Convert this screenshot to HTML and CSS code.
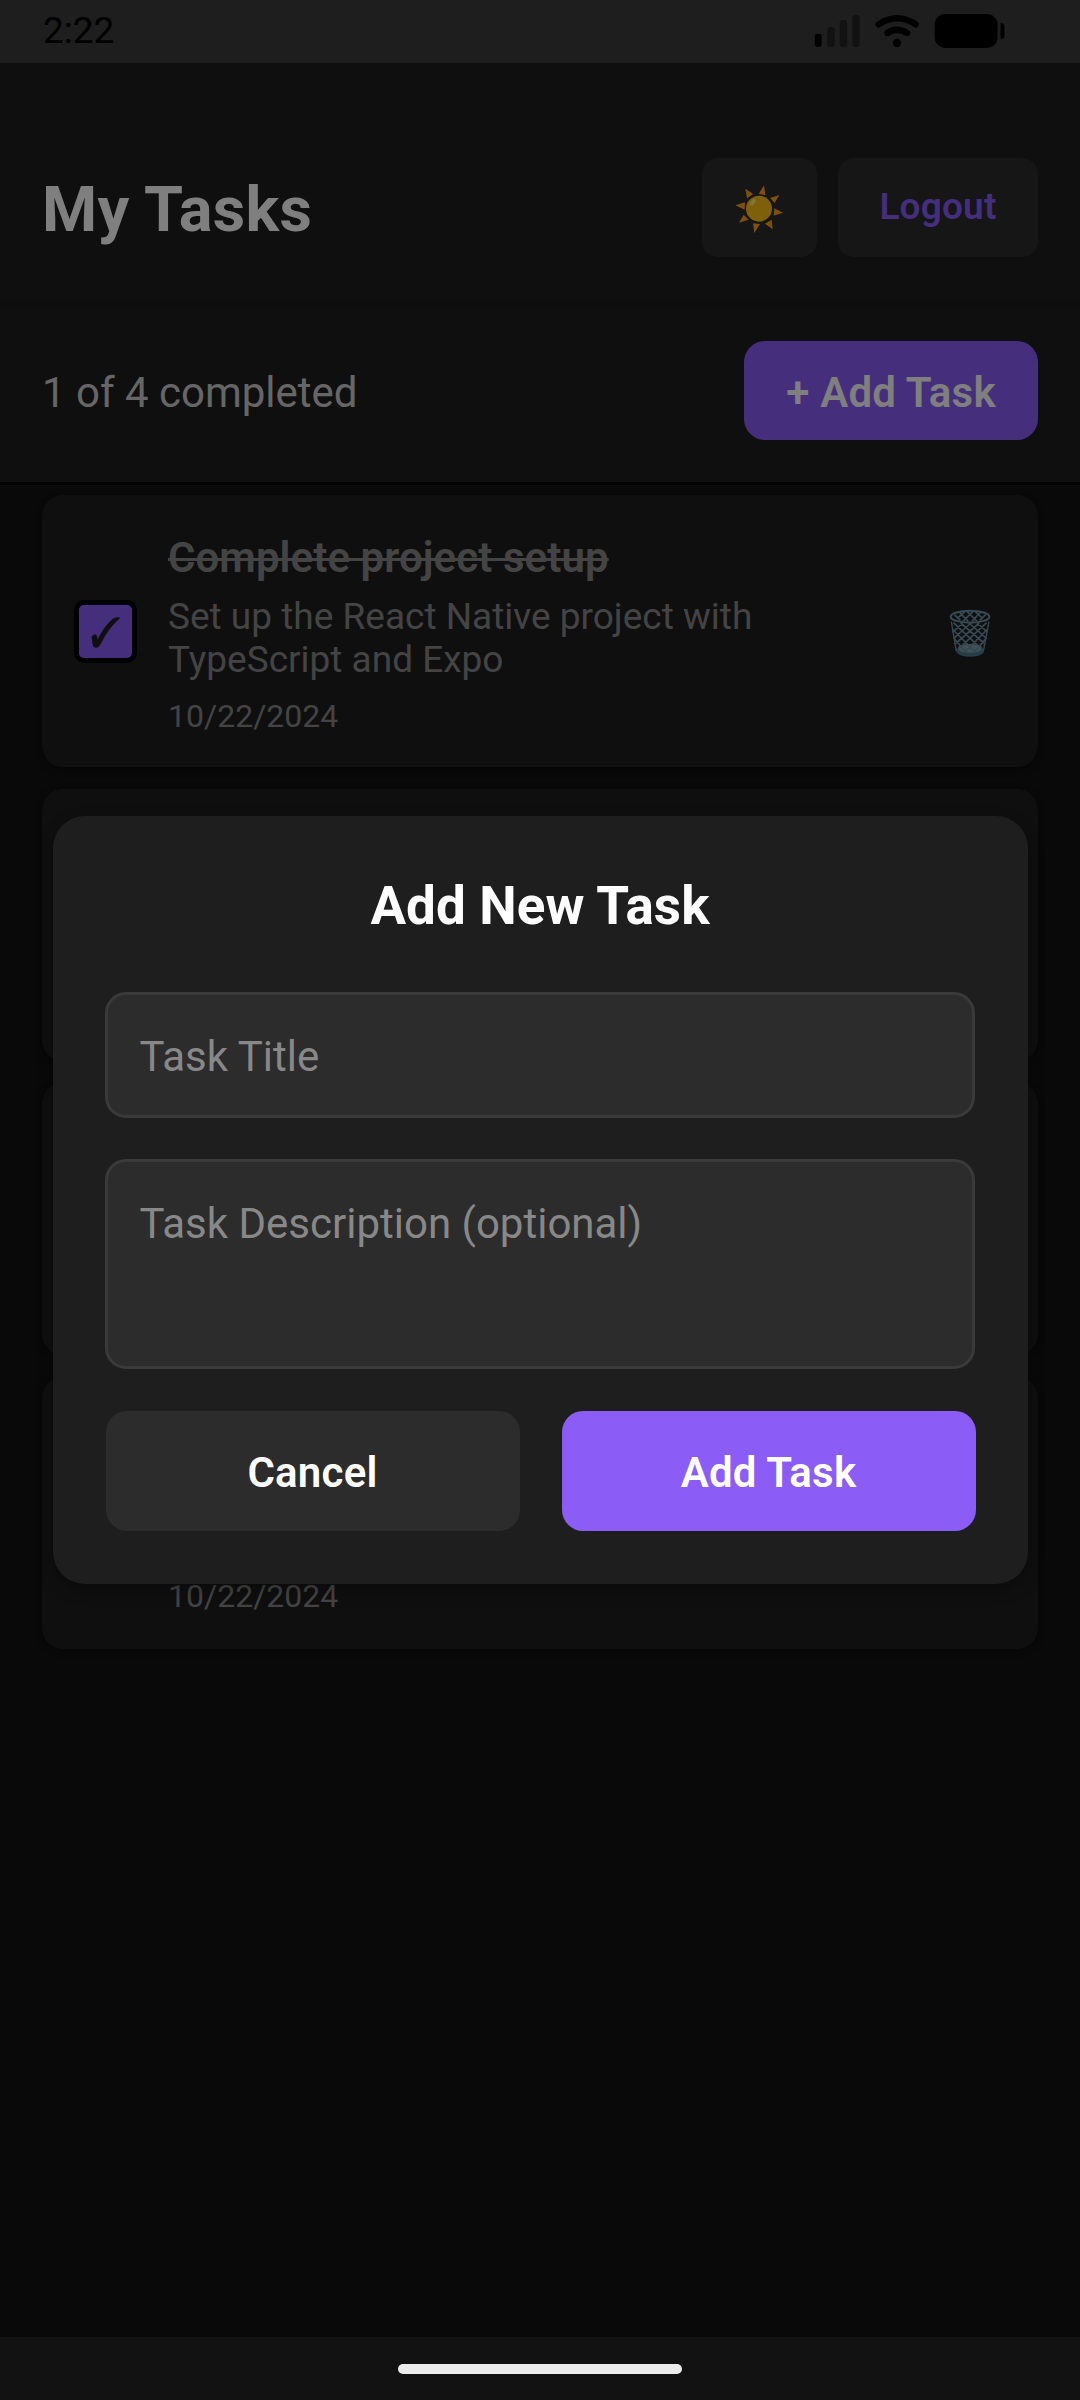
FILE: index.html
```html
<!DOCTYPE html>
<html lang="en">
<head>
<meta charset="utf-8">
<title>My Tasks</title>
<link rel="stylesheet" href="styles.css">
</head>
<body>
<div class="screen">
  <div class="status-bar">
    <span class="clock">2:22</span>
    <svg class="status-icons" viewBox="100 36 580 112">
      <rect x="105" y="101" width="21" height="40" rx="10"/>
      <g fill="#121212">
        <rect x="143" y="81" width="22" height="60" rx="10"/>
        <rect x="180" y="60" width="22" height="81" rx="10"/>
        <rect x="218" y="44" width="22" height="97" rx="10"/>
      </g>
      <g fill="none" stroke="#000" stroke-width="19" stroke-linecap="round">
        <path d="M297 73Q352 37 408 73"/>
        <path d="M323 99Q352 80 382 99"/>
      </g>
      <circle cx="352" cy="129" r="12.500"/>
      <rect x="465" y="42" width="189" height="102" rx="32"/>
      <path d="M663 69Q675 69 675 81V105Q675 117 663 117Z"/>
    </svg>
  </div>

  <main class="app">
    <header class="header">
      <h1 class="header-title">My Tasks</h1>
      <div class="header-actions">
        <button class="button button-theme" aria-label="Toggle theme">
          <svg class="sun" viewBox="159 160 156 156">
            <path fill="#ff9f1c" d="M252 167L236 193 256 196ZM298 196L270 205 284 220ZM309 249L283 236 281 258ZM278 299L255 282 275 270ZM223 310L219 281 240 283ZM177 279L191 255 206 270ZM166 227L195 218 194 240ZM196 177L220 193 201 206Z"/>
            <circle cx="237" cy="237" r="39" fill="#fcc014"/>
            <ellipse cx="219" cy="218" rx="6" ry="11" fill="#ffec78" transform="rotate(30 219 218)"/>
          </svg>
        </button>
        <button class="button button-logout">Logout</button>
      </div>
    </header>

    <section class="stats">
      <span class="stats-text">1 of 4 completed</span>
      <button class="button button-add">+ Add Task</button>
    </section>

    <section class="task-list">
      <article class="task">
        <span class="checkbox">
          <svg class="check" viewBox="237 405 159 159">
            <path d="M276 499Q286 491 289 497L293 511Q312 470 338 448Q347 441 359 444Q324 474 301 522Q295 534 287 532Q280 532 279 523Z"/>
          </svg>
        </span>
        <div class="task-body">
          <h2 class="task-title">Complete project setup</h2>
          <p class="task-text">Set up the React Native project with TypeScript and Expo</p>
          <time class="task-date">10/22/2024</time>
        </div>
        <svg class="trash" viewBox="745 415 132 150">
          <path fill="#4a7d90" d="M768 538Q810 556 853 538L851 550Q840 561 811 561 782 561 772 550Z"/>
          <ellipse cx="811" cy="536" rx="37" ry="13" fill="#83a3af"/>
          <path fill="none" stroke="#6c91a3" stroke-width="5" d="M761 459L848 540M758 478L828 549M765 509L800 548M783 460L856 523M808 460L861 507M833 460L864 488M861 459L774 540M864 478L794 549M857 509L822 548M839 460L766 523M814 460L761 507M789 460L758 488M764 435L782 452M780 428L806 456M802 425L832 455M826 425L850 447M858 435L840 452M842 428L816 456M820 425L790 455M796 425L772 447"/>
          <path fill="none" stroke="#6c91a3" stroke-width="4" d="M755 456L770 545M868 456L851 545"/>
          <ellipse cx="811" cy="441" rx="58" ry="18" fill="none" stroke="#7095a6" stroke-width="6"/>
        </svg>
      </article>
      <article class="task"></article>
      <article class="task"></article>
      <article class="task">
        <span class="checkbox checkbox-empty"></span>
        <div class="task-body task-body-end">
          <time class="task-date">10/22/2024</time>
        </div>
      </article>
    </section>

    <div class="overlay">
      <form class="modal">
        <h2 class="modal-title">Add New Task</h2>
        <input class="field" placeholder="Task Title">
        <textarea class="field field-multi" placeholder="Task Description (optional)"></textarea>
        <div class="modal-actions">
          <button type="button" class="button modal-button">Cancel</button>
          <button type="button" class="button modal-button modal-button-primary">Add Task</button>
        </div>
      </form>
    </div>
  </main>

  <footer class="nav-bar"><span class="nav-handle"></span></footer>
</div>
</body>
</html>
```
FILE: styles.css
```css
* {
  box-sizing: border-box;
}

body,
h1,
h2,
p {
  margin: 0;
}

body {
  background: #121212;
  font-family: Roboto, sans-serif;
}

.screen {
  display: flex;
  flex-direction: column;
  width: 1080px;
  height: 2400px;
  overflow: hidden;
}

.status-bar {
  display: flex;
  justify-content: space-between;
  height: 63px;
  padding: 9px 73.5px 0 43px;
  background: #1e1e1e;
}

.clock {
  color: #000;
  font-size: 37px;
  line-height: 43px;
}

.status-icons {
  width: 193.3px;
  height: 37.3px;
  margin-top: 3px;
}

.app {
  position: relative;
  flex: 1;
  background: #121212;
}

.button {
  border: 0;
  font-family: inherit;
  font-weight: 600;
  letter-spacing: 0.2px;
}

.header {
  display: flex;
  align-items: center;
  justify-content: space-between;
  height: 237px;
  padding: 95px 42px 43px;
  background: #1e1e1e;
}

.header-title {
  padding-top: 4px;
  color: #fff;
  font-size: 63px;
  letter-spacing: 0.35px;
  line-height: 74px;
}

.header-actions {
  display: flex;
  gap: 21px;
}

.button-theme,
.button-logout {
  display: flex;
  align-items: center;
  justify-content: center;
  height: 99px;
  border-radius: 16px;
  background: #2c2c2c;
}

.button-theme {
  width: 115px;
  padding: 3px 2px 0 0;
}

.sun {
  width: 52px;
  height: 52px;
}

.button-logout {
  width: 200px;
  padding: 0 0 3px;
  color: #8b5cf6;
  font-size: 37px;
  line-height: 43px;
}

.stats {
  display: flex;
  align-items: center;
  justify-content: space-between;
  height: 185px;
  padding: 0 42px 1px;
  border-bottom: 3px solid #000;
  background: #1e1e1e;
  box-shadow: inset 0 10px 0 #1c1c1c;
}

.stats-text {
  padding-top: 3px;
  color: #ccc;
  font-size: 42px;
  line-height: 49px;
}

.button-add {
  width: 294px;
  height: 99px;
  padding: 3px 0 0;
  border-radius: 21px;
  background: #8b5cf6;
  color: #fff;
  font-size: 42px;
  line-height: 49px;
}

.task-list {
  display: flex;
  flex-direction: column;
  gap: 22px;
  padding: 10px 42px;
}

.task {
  display: flex;
  height: 272px;
  padding: 38px 46px 0 32px;
  border-radius: 21px;
  background: #1e1e1e;
  box-shadow: 0 2px 7px rgba(0, 0, 0, 0.35);
}

.checkbox {
  flex: none;
  width: 63px;
  height: 63px;
  margin: 67px 31px 0 0;
  border: 5px solid #000;
  border-radius: 10px;
  background: #8b5cf6;
}

.checkbox-empty {
  background: transparent;
}

.check {
  display: block;
  width: 53px;
  height: 53px;
  fill: #1e1e1e;
  stroke: #1e1e1e;
  stroke-width: 2.5;
}

.task-body {
  display: flex;
  flex: 1;
  flex-direction: column;
}

.task-body-end {
  padding-top: 163px;
}

.task-title {
  align-self: flex-start;
  color: #888;
  font-size: 42px;
  font-weight: 600;
  letter-spacing: 0.07px;
  line-height: 49px;
  text-decoration: line-through;
  text-decoration-thickness: 3px;
}

.task-text {
  width: 640px;
  margin: 13px 0 17px;
  color: #888;
  font-size: 37px;
  line-height: 43px;
}

.task-date {
  color: #888;
  font-size: 32px;
  line-height: 37px;
}

.trash {
  flex: none;
  width: 44px;
  height: 50px;
  margin-top: 75px;
}

.overlay {
  position: absolute;
  inset: 0;
  display: flex;
  align-items: center;
  justify-content: center;
  background: rgba(0, 0, 0, 0.5);
}

.modal {
  display: flex;
  flex-direction: column;
  width: 975px;
  height: 768px;
  padding: 59px 52px 0;
  border-radius: 32px;
  background: #1e1e1e;
  box-shadow: 0 6px 16px rgba(0, 0, 0, 0.3);
}

.modal-title {
  height: 62px;
  margin-bottom: 55px;
  color: #fff;
  font-size: 53px;
  letter-spacing: 0.1px;
  line-height: 62px;
  text-align: center;
}

.field {
  display: block;
  width: 870px;
  height: 126px;
  margin: 0 0 41px;
  padding: 2px 32px 0;
  border: 3px solid #3a3a3a;
  border-radius: 21px;
  outline: 0;
  background: #2c2c2c;
  font-family: inherit;
  font-size: 42px;
  line-height: 49px;
}

.field::placeholder {
  color: #888;
  opacity: 1;
}

.field-multi {
  height: 210px;
  margin-bottom: 42px;
  padding-top: 37px;
  resize: none;
}

.modal-actions {
  display: flex;
  gap: 42px;
  width: 870px;
  margin-left: 1px;
}

.modal-button {
  flex: 1;
  height: 120px;
  padding: 3px 0 0;
  border-radius: 21px;
  background: #2c2c2c;
  color: #fff;
  font-size: 42px;
  line-height: 49px;
}

.modal-button-primary {
  background: #8b5cf6;
}

.nav-bar {
  display: flex;
  justify-content: center;
  height: 63px;
  padding-top: 27px;
  background: #121212;
}

.nav-handle {
  width: 284px;
  height: 10px;
  border-radius: 5px;
  background: #ececec;
}
```
